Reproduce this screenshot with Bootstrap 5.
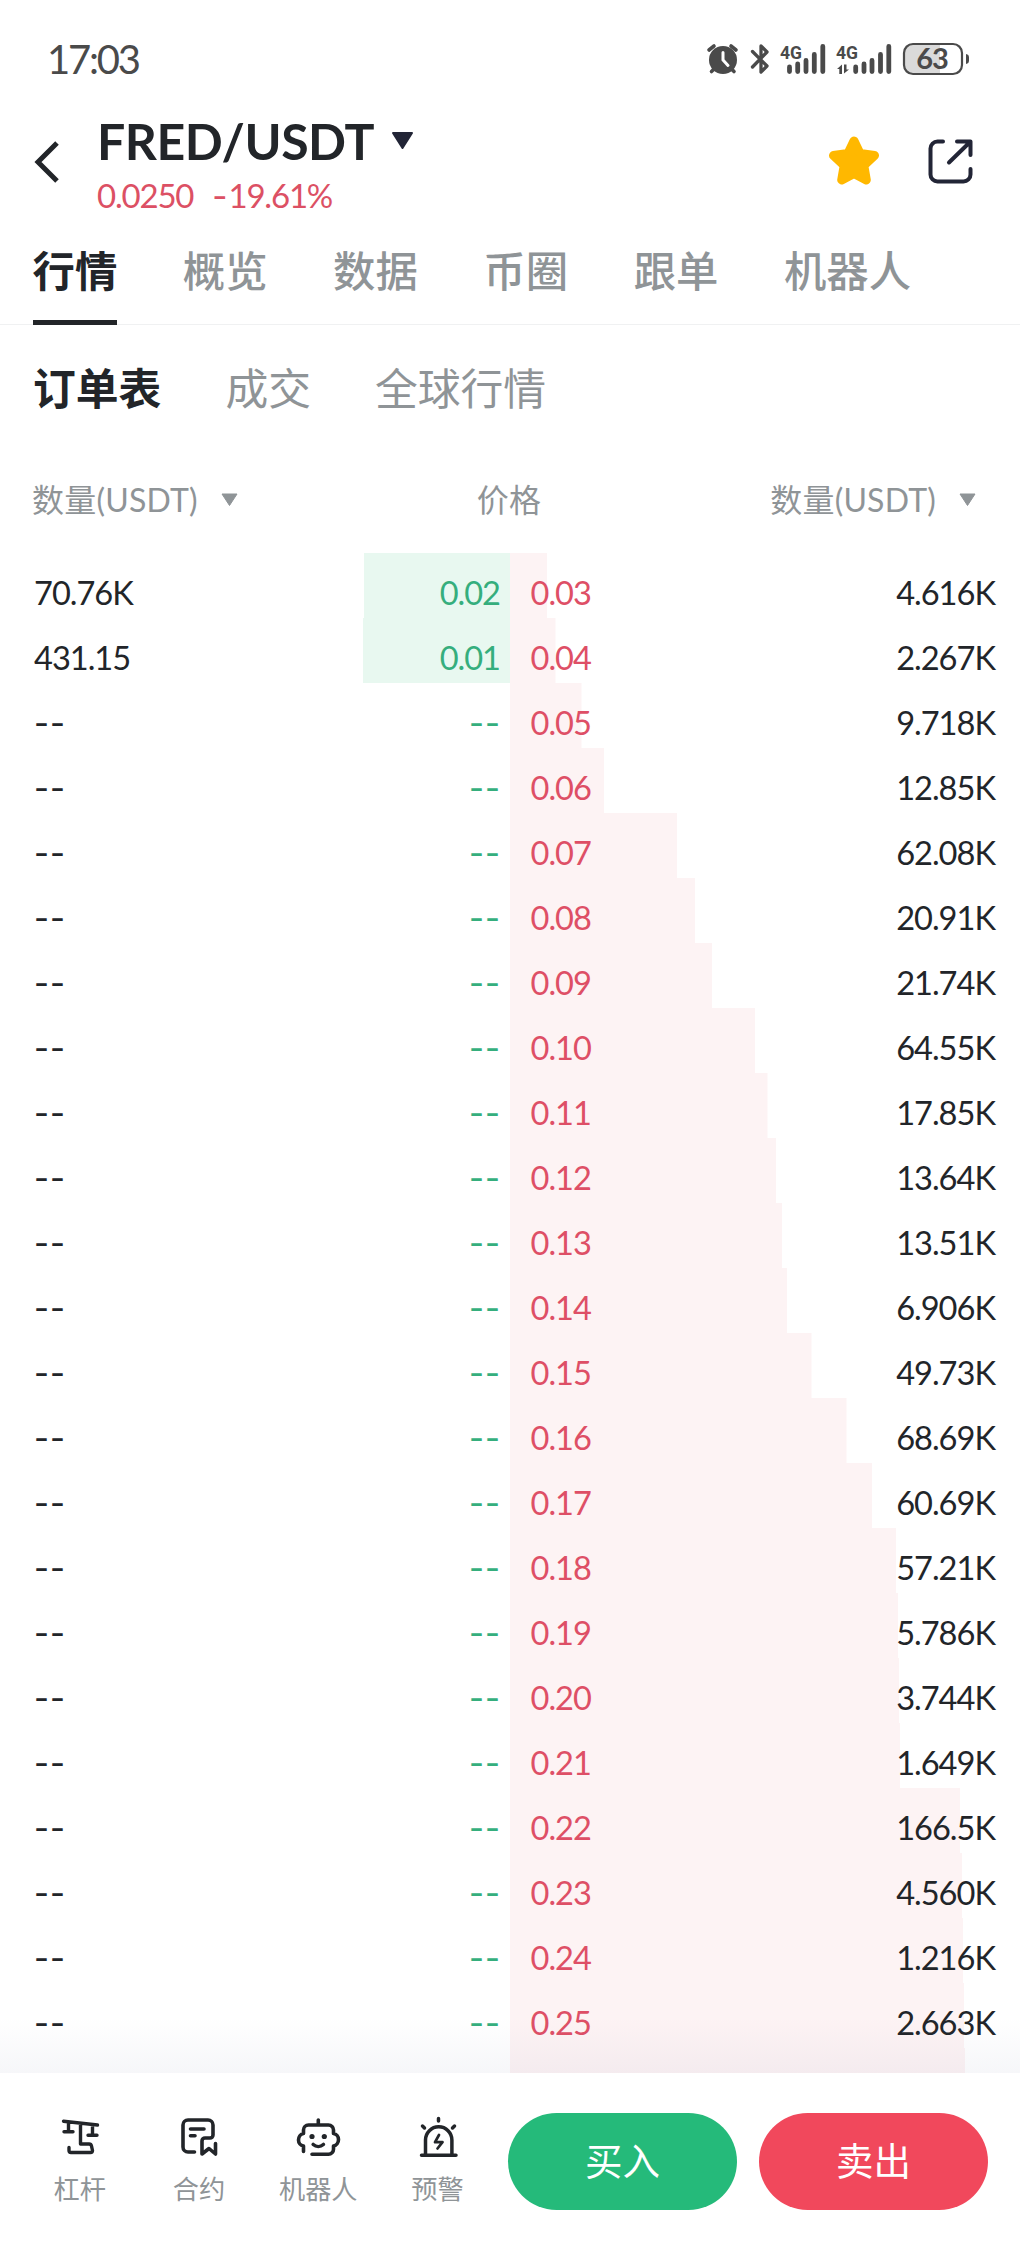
<!DOCTYPE html>
<html lang="zh-CN">
<head>
<meta charset="utf-8">
<meta name="viewport" content="width=device-width, initial-scale=1">
<title>FRED/USDT</title>
<link href="https://cdn.jsdelivr.net/npm/bootstrap@5.3.0/dist/css/bootstrap.min.css" rel="stylesheet">
<style>
  :root { --ink: #222529; --muted-ink: #8f9497; --up: #25ba7a; --down: #f1485c; }
  body { font-family: Lato, "Noto Sans CJK SC", sans-serif; color: var(--ink); background: #fff; }
  .screen { width: 1020px; height: 2250px; overflow: hidden; }
  svg { display: block; flex: none; }
  .statusbar { height: 100px; padding: 20px 50px 0 47px; color: #4a4a4a; }
  .clock { font-size: 40px; line-height: 78px; letter-spacing: -2.2px; }
  .pair-head { height: 140px; padding-left: 34px; padding-right: 46px; }
  .pair-name { font-size: 50px; font-weight: 700; line-height: 60px; margin-top: 11px; letter-spacing: -.45px; }
  .pair-price { font-size: 33px; line-height: 40px; margin-top: 4px; color: #dc5064; letter-spacing: -1.2px; }
  .pair-price .dash, .level .dash { font-family: Inter, sans-serif; }
  .pair-price .dash { letter-spacing: 1px; }
  .tabs-main { height: 85px; padding-left: 32.500px; gap: 65.500px; border-bottom: 1px solid #f0f1f2; font-size: 42.400px; font-weight: 500; color: var(--muted-ink); }
  .tabs-main span { line-height: 62px; height: 85px; }
  .tabs-main .on { color: var(--ink); font-weight: 700; border-bottom: 5px solid var(--ink); }
  .tabs-sub { padding-left: 33px; padding-top: 34px; gap: 64px; font-size: 42.800px; line-height: 60px; color: var(--muted-ink); height: 131px; }
  .tabs-sub .on { color: var(--ink); font-weight: 700; }
  .book-head { height: 97px; font-size: 32px; line-height: 88px; letter-spacing: .2px; color: var(--muted-ink); padding: 0 44px 0 32px; }
  .book-head .mid { padding-left: 10px; }
  .book { height: 1521px; overflow: hidden; position: relative; }
  .level { height: 65px; font-size: 32.600px; line-height: 54px; letter-spacing: -1px; }
  .level > div { padding-top: 13px; background-repeat: no-repeat; background-size: var(--w) 100%; }
  .level .dash { letter-spacing: 1px; line-height: 54px; }
  .bid { padding-left: 34px; padding-right: 10px; background-position: right top; background-image: linear-gradient(#e8f8f0, #e8f8f0); }
  .bid .px.dash { margin-right: -1px; }
  .ask { padding-left: 20.500px; padding-right: 25px; background-image: linear-gradient(#fdf3f4, #fdf3f4); }
  .bid .px { color: #35ae7d; }
  .ask .px { color: #de4f66; }
  .book-fade { position: absolute; left: 0; right: 0; bottom: 0; height: 56px; background: linear-gradient(rgba(50,60,120,0), rgba(50,60,120,.045)); }
  .dock { height: 177px; padding: 39.500px 32px 0 20px; }
  .dock-item { width: 119.300px; font-size: 26.200px; line-height: 40px; color: var(--muted-ink); }
  .dock-item svg { color: var(--ink); margin: 0 0 10px; }
  .trade { width: 229px; height: 97px; font-size: 37.500px; color: #fff; border: 0; padding: 0; }
  .trade:hover { color: #fff; }
  .buy { background: var(--up); } .sell { background: var(--down); }
</style>
</head>
<body>
<div class="screen d-flex flex-column">

  <header class="statusbar d-flex justify-content-between">
    <span class="clock">17:03</span>
    <svg width="266" height="40" viewBox="704 40 266 40" style="margin-top:20px" fill="#4a4a4a" stroke-linecap="round">
      <g stroke="#4a4a4a" stroke-width="3.6">
        <path d="M709 50l5-4M736 50l-5-4M711.500 71.500l4-4M734 71.500l-4-4"/>
      </g>
      <circle cx="723" cy="60" r="14"/>
      <path d="M723 52.500V60l5 5.500" fill="none" stroke="#fff" stroke-width="3"/>
      <path d="M752.500 51.500L767 66l-6 6V46l6 6-14.500 15" fill="none" stroke="#4a4a4a" stroke-width="3.3" stroke-linejoin="round"/>
      <text x="780" y="58.500" font-family="Roboto" font-weight="700" font-size="18.500" textLength="22" lengthAdjust="spacingAndGlyphs">4G</text>
      <text x="836" y="58.500" font-family="Roboto" font-weight="700" font-size="18.500" textLength="22" lengthAdjust="spacingAndGlyphs">4G</text>
      <g stroke="#4a4a4a" stroke-width="4.800">
        <path d="M789.500 67v4.500M797.700 64v7.500M806 60.500v11M814.300 54.500v17M822.800 46.500v25"/>
        <path d="M855.700 67v4.500M864 64v7.500M872 60.500v11M880.500 54.500v17M888.800 46.500v25"/>
      </g>
      <path d="M837 69l5-4.500V74h-2.700v-5zM849 69.500l-5 4V64.500h2.500v5z"/>
      <rect x="904" y="44" width="58" height="30" rx="9" fill="#fff"/>
      <path d="M913 44h27v30h-27a9 9 0 0 1-9-9V53a9 9 0 0 1 9-9z" fill="#dadada"/>
      <rect x="904" y="44" width="58" height="30" rx="9" fill="none" stroke="#4a4a4a" stroke-width="2.200"/>
      <path d="M966 54a3.500 3.500 0 0 1 3 3.500v3a3.500 3.500 0 0 1-3 3.500z"/>
      <text x="932" y="69.300" text-anchor="middle" font-family="Lato" font-weight="700" font-size="29" letter-spacing="-1">63</text>
    </svg>
  </header>

  <section class="pair-head d-flex">
    <svg width="26" height="44" viewBox="0 0 26 44" style="margin-top:40px"><path d="M23 3L4 22l19 19" fill="none" stroke="#222529" stroke-width="5"/></svg>
    <div style="margin-left:37px">
      <div class="pair-name d-flex align-items-center"><span>FRED/USDT</span>
        <svg width="23" height="20" viewBox="0 0 23 20" style="margin-left:17px"><path d="M2 2h19l-9.500 15z" fill="#222536" stroke="#222536" stroke-width="2" stroke-linejoin="round"/></svg>
      </div>
      <div class="pair-price"><span>0.0250</span><span style="margin-left:19px"><span class="dash">-</span>19.61%</span></div>
    </div>
    <div class="ms-auto d-flex">
      <svg width="54" height="52" viewBox="0 0 54 52" style="margin-top:35px"><path d="M27 6l6 12.500 14.500 2-10.700 10 2.500 14.500L27 38.500 14.700 45l2.500-14.500L6.500 20.500l14.500-2z" fill="#ffb800" stroke="#ffb800" stroke-width="9" stroke-linejoin="round"/></svg>
      <svg width="47" height="47" viewBox="0 0 47 47" style="margin:38px 0 0 46px" fill="none" stroke="#222536" stroke-width="4" stroke-linecap="round" stroke-linejoin="round"><path d="M16 3.500h-5.500a7 7 0 0 0-7 7v26a7 7 0 0 0 7 7h26a7 7 0 0 0 7-7V31M30 3.500h13.500V17M42 5L22 24.500"/></svg>
    </div>
  </section>

  <nav class="tabs-main d-flex">
    <span class="on">行情</span><span>概览</span><span>数据</span><span>币圈</span><span>跟单</span><span>机器人</span>
  </nav>

  <nav class="tabs-sub d-flex">
    <span class="on">订单表</span><span>成交</span><span>全球行情</span>
  </nav>

  <div class="book-head d-flex justify-content-between align-items-start">
    <span class="d-flex align-items-center">数量(USDT)<svg width="17" height="14" viewBox="0 0 17 14" style="margin-left:23px"><path d="M1 1h15L8.500 12.500z" fill="#8f9497" stroke="#8f9497" stroke-linejoin="round"/></svg></span>
    <span class="mid">价格</span>
    <span class="d-flex align-items-center">数量(USDT)<svg width="17" height="14" viewBox="0 0 17 14" style="margin-left:23px"><path d="M1 1h15L8.500 12.500z" fill="#8f9497" stroke="#8f9497" stroke-linejoin="round"/></svg></span>
  </div>

  <main class="book" id="book"></main>

  <footer class="dock d-flex">
    <div class="dock-item d-flex flex-column align-items-center">
      <svg width="46" height="46" viewBox="57 2113 46 46" fill="none" stroke="currentColor" stroke-width="3.400" stroke-linecap="round" stroke-linejoin="round"><path d="M63.500 2121.300l34 3.700M68.500 2122v9.500M64 2131.700h9M92.500 2125v9.500M88 2135.200h9M80.500 2123.500V2144h8.500a2.500 2.500 0 0 1 2.500 2l1 4.500a2 2 0 0 1-2 2H71a2 2 0 0 1-2-2v-3"/></svg>
      <span>杠杆</span>
    </div>
    <div class="dock-item d-flex flex-column align-items-center">
      <svg width="46" height="46" viewBox="176 2113 46 46" fill="none" stroke="currentColor" stroke-width="3.600" stroke-linecap="round" stroke-linejoin="round"><path d="M194.500 2152H188a5 5 0 0 1-5-5v-22a5 5 0 0 1 5-5h20a5 5 0 0 1 5 5v10a3 3 0 0 1-3 3h-5a3 3 0 0 0-3 3v13l7-5.500 6.500 5.500v-10.500M190.500 2129h13.500M190.500 2135.700h4.500"/></svg>
      <span>合约</span>
    </div>
    <div class="dock-item d-flex flex-column align-items-center">
      <svg width="46" height="46" viewBox="295 2113 46 46" fill="none" stroke="currentColor" stroke-width="3.600" stroke-linecap="round" stroke-linejoin="round"><path d="M318.300 2120v5M303.500 2151.500V2146c-3-.5-5-3-5-6s2-6 5-6.500v-3.500a5 5 0 0 1 5-5h20a5 5 0 0 1 5 5v3.500c3 .5 5 3 5 6s-2 6-5 6.500v3.300a5 5 0 0 1-5 5h-16.500M313.200 2144.500c3 2.700 7.200 2.700 10.200 0"/><g fill="currentColor" stroke="none"><circle cx="312" cy="2136.500" r="2.600"/><circle cx="324.300" cy="2136.500" r="2.600"/></g></svg>
      <span>机器人</span>
    </div>
    <div class="dock-item d-flex flex-column align-items-center">
      <svg width="46" height="46" viewBox="414 2113 46 46" fill="none" stroke="currentColor" stroke-width="3.500" stroke-linecap="round" stroke-linejoin="round"><path d="M420.500 2155.300h34.500M424.500 2155v-15a13.200 13.200 0 0 1 26.400 0v15M437.500 2118.500v2.500M421.500 2126l2 2M453.500 2126l-2 2"/><path d="M438 2135l-4 7.200h7.500l-5 6.300" stroke-width="2.700"/></svg>
      <span>预警</span>
    </div>
    <div class="d-flex ms-auto" style="gap:22px">
      <button type="button" class="btn trade buy rounded-pill">买入</button>
      <button type="button" class="btn trade sell rounded-pill">卖出</button>
    </div>
  </footer>
</div>

<script>
  // [ask price, ask amount, depth width in px]
  const asks = [
    ["0.03","4.616K",37],["0.04","2.267K",45.5],["0.05","9.718K",71.5],["0.06","12.85K",94],
    ["0.07","62.08K",167],["0.08","20.91K",185],["0.09","21.74K",202],["0.10","64.55K",245],
    ["0.11","17.85K",257.5],["0.12","13.64K",266],["0.13","13.51K",272],["0.14","6.906K",277],
    ["0.15","49.73K",301.5],["0.16","68.69K",336.5],["0.17","60.69K",362],["0.18","57.21K",386],
    ["0.19","5.786K",388],["0.20","3.744K",389],["0.21","1.649K",390],["0.22","166.5K",450],
    ["0.23","4.560K",452],["0.24","1.216K",453],["0.25","2.663K",454],["","",455]
  ];
  // [bid amount, bid price, depth width in px]
  const bids = [["70.76K","0.02",146],["431.15","0.01",147]];
  document.getElementById("book").innerHTML = asks.map(([ap, aq, aw], i) => {
    const [bq, bp, bw] = bids[i] || (ap ? ["--", "--", 0] : ["", "", 0]);
    const dash = bq === "--" ? "dash" : "";
    return `<div class="level d-flex">
      <div class="bid w-50 d-flex justify-content-between" style="--w:${bw}px"><span class="${dash}">${bq}</span><span class="px ${dash}">${bp}</span></div>
      <div class="ask w-50 d-flex justify-content-between" style="--w:${aw}px"><span class="px">${ap}</span><span>${aq}</span></div>
    </div>`;
  }).join("") + '<div class="book-fade"></div>';
</script>
<script src="https://cdn.jsdelivr.net/npm/bootstrap@5.3.0/dist/js/bootstrap.bundle.min.js"></script>
</body>
</html>
